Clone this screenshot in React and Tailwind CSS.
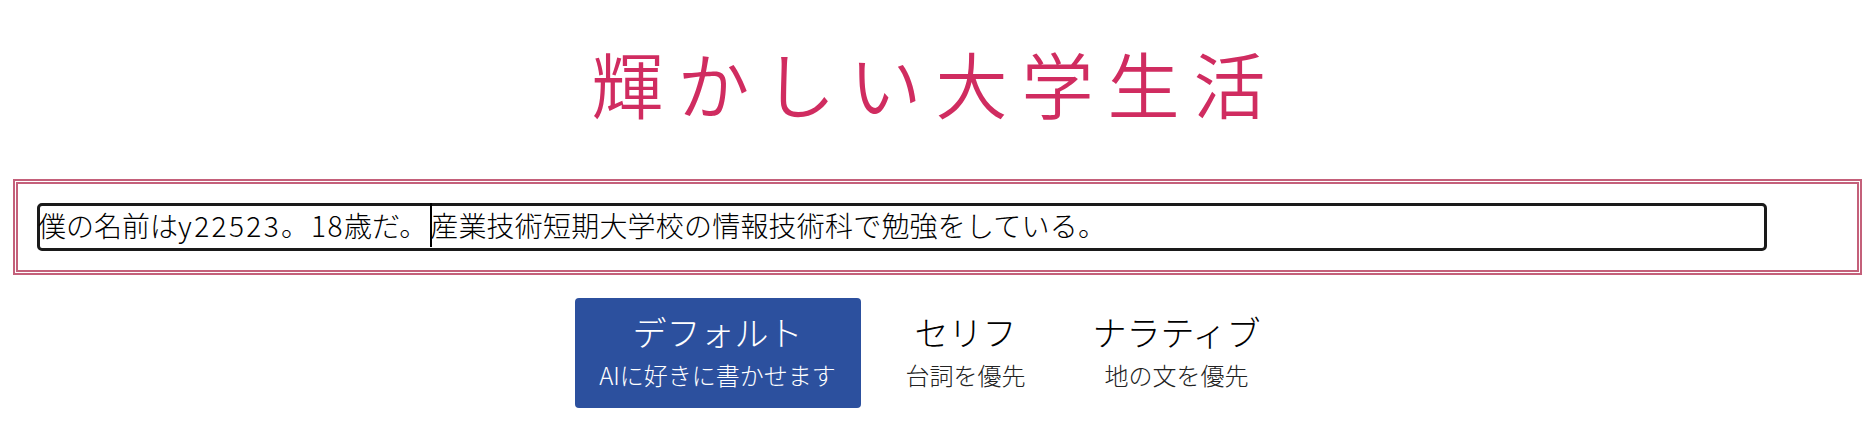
const JP = "font-['Noto_Sans_CJK_JP','Noto_Sans',sans-serif]"

const STYLES = [
  { label: 'デフォルト', sub: 'AIに好きに書かせます', width: 'w-[286px]', active: true },
  { label: 'セリフ', sub: '台詞を優先', width: 'w-[210px]' },
  { label: 'ナラティブ', sub: '地の文を優先', width: 'w-[212px]' },
]

export default function App() {
  return (
    <div className={`${JP} h-[423px] bg-white text-black overflow-hidden`}>
      <div className="pr-[4px] pt-[30px] h-[179px] flex justify-center">
        <h1 className="text-[72px] leading-[104px] font-[350] tracking-[14px] text-[#d02c60] whitespace-nowrap">
          輝かしい大学生活
        </h1>
      </div>

      <div className="mx-[13px] h-[96px] border-[5px] border-double border-[#c4607a] pl-[19px] pt-[19px]">
        <div className="w-[1730px] h-[48px] border-[3px] border-[#1a1a1a] rounded-[5px] flex text-[28px] leading-[38px] font-light whitespace-nowrap">
          <span className="-ml-[2px]">
            僕の名前は<span className="tracking-[2.4px]">y22523</span>。<span className="ml-[2px] tracking-[1.5px]">18</span>歳だ。
          </span>
          <span className="w-[2px] h-[44px] -mt-[3px] bg-black ml-[3px] -mr-[2px]" />
          <span className="tracking-[0.2px]">産業技術短期大学校の情報技術科で勉強をしている。</span>
        </div>
      </div>

      <div className="pr-[18px] pt-[23px] flex justify-center">
        {STYLES.map(s => (
          <button key={s.label} type="button"
            className={`${s.width} h-[110px] rounded-[4px] flex flex-col items-center font-light ${
              s.active ? 'bg-[#2c509e] text-white' : 'text-black'
            }`}>
            <span className="mt-[12px] text-[34px] leading-[44px]">{s.label}</span>
            <span className={`mt-[5px] text-[24px] leading-[32px] ${s.active ? '' : 'text-[#222]'}`}>{s.sub}</span>
          </button>
        ))}
      </div>
    </div>
  )
}
